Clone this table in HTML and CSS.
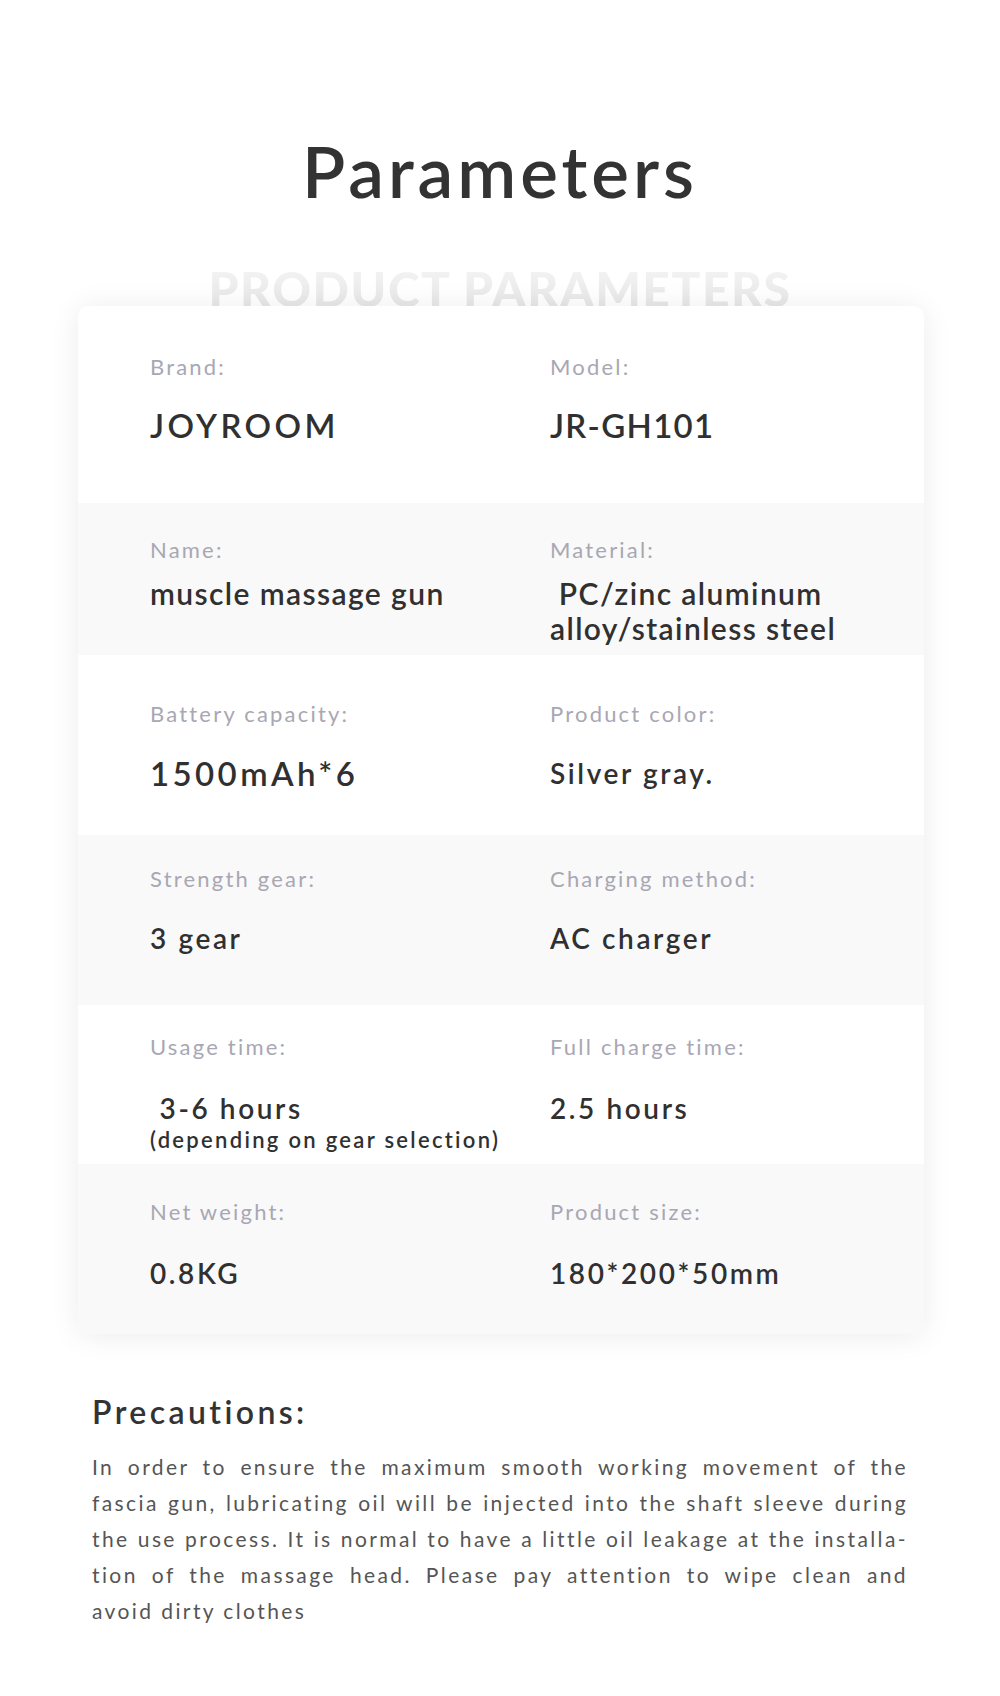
FILE: index.html
```html
<!DOCTYPE html>
<html>
<head>
  <title>Parameters</title>
  <link rel="stylesheet" href="styles.css">
</head>
<body>
  <h1 class="title">Parameters</h1>
  <div class="ghost">PRODUCT PARAMETERS</div>

  <div class="card">
    <div class="row r1">
      <div class="cell">
        <div class="label">Brand:</div>
        <div class="value big">JOYROOM</div>
      </div>
      <div class="cell">
        <div class="label">Model:</div>
        <div class="value big tight">JR-GH101</div>
      </div>
    </div>
    <div class="row r2 grey">
      <div class="cell">
        <div class="label">Name:</div>
        <div class="value mid">muscle massage gun</div>
      </div>
      <div class="cell">
        <div class="label">Material:</div>
        <div class="value mid">&nbsp;PC/zinc aluminum<br>alloy/stainless steel</div>
      </div>
    </div>
    <div class="row r3">
      <div class="cell">
        <div class="label">Battery capacity:</div>
        <div class="value big">1500mAh*6</div>
      </div>
      <div class="cell">
        <div class="label">Product color:</div>
        <div class="value">Silver gray.</div>
      </div>
    </div>
    <div class="row r4 grey">
      <div class="cell">
        <div class="label">Strength gear:</div>
        <div class="value">3 gear</div>
      </div>
      <div class="cell">
        <div class="label">Charging method:</div>
        <div class="value">AC charger</div>
      </div>
    </div>
    <div class="row r5">
      <div class="cell">
        <div class="label">Usage time:</div>
        <div class="value">&nbsp;3-6 hours</div>
        <div class="note">(depending on gear selection)</div>
      </div>
      <div class="cell">
        <div class="label">Full charge time:</div>
        <div class="value">2.5 hours</div>
      </div>
    </div>
    <div class="row r6 grey">
      <div class="cell">
        <div class="label">Net weight:</div>
        <div class="value">0.8KG</div>
      </div>
      <div class="cell">
        <div class="label">Product size:</div>
        <div class="value">180*200*50mm</div>
      </div>
    </div>
  </div>

  <div class="notes">
    <h2 class="notes-title">Precautions:</h2>
    <p class="notes-text">
      <span class="line">In order to ensure the maximum smooth working movement of the</span>
      <span class="line">fascia gun, lubricating oil will be injected into the shaft sleeve during</span>
      <span class="line">the use process. It is normal to have a little oil leakage at the installa-</span>
      <span class="line">tion of the massage head. Please pay attention to wipe clean and</span>
      <span class="line last">avoid dirty clothes</span>
    </p>
  </div>
</body>
</html>
```

FILE: styles.css
```css
* {
  box-sizing: border-box;
}
body {
  margin: 0;
  background: #fff;
  font-family: Lato, "Noto Sans", sans-serif;
  color: #333;
}
.title {
  margin: 135px 0 0;
  font-size: 71px;
  line-height: 1;
  font-weight: 600;
  letter-spacing: 4px;
  text-align: center;
  color: #333;
}
.ghost {
  margin-top: 59px;
  font-size: 48px;
  line-height: 1;
  font-weight: 900;
  letter-spacing: 1.5px;
  text-align: center;
  color: transparent;
  background: linear-gradient(#f4f4f4, #e5e5e5);
  -webkit-background-clip: text;
  background-clip: text;
}
.card {
  position: relative;
  z-index: 1;
  width: 846px;
  margin: -7px 0 0 78px;
  background: #fff;
  border-radius: 10px;
  box-shadow: 0 2px 30px rgba(0, 0, 0, 0.08);
  overflow: hidden;
}
.row {
  display: grid;
  grid-template-columns: 400px 1fr;
  padding-left: 72px;
}
.grey {
  background: #f9f9f9;
}
.label {
  font-size: 22px;
  line-height: 22px;
  letter-spacing: 2.2px;
  color: #a8a7b3;
}
.value {
  font-size: 28px;
  line-height: 33px;
  font-weight: 600;
  letter-spacing: 2.6px;
  color: #303030;
}
.value.big {
  font-size: 33px;
  letter-spacing: 3.4px;
}
.value.tight {
  letter-spacing: 1.3px;
}
.value.mid {
  font-size: 30px;
  line-height: 35px;
  letter-spacing: 1.4px;
}
.note {
  font-size: 22px;
  line-height: 29px;
  font-weight: 600;
  letter-spacing: 2.3px;
  color: #303030;
}
.r1 { height: 197px; padding-top: 50px; }
.r1 .value { margin-top: 31px; }
.r2 { height: 152px; padding-top: 36px; }
.r2 .value { margin-top: 15px; }
.r3 { height: 180px; padding-top: 48px; }
.r3 .value { margin-top: 32px; }
.r4 { height: 170px; padding-top: 33px; }
.r4 .value { margin-top: 32px; }
.r5 { height: 159px; padding-top: 31px; }
.r5 .value { margin-top: 34px; }
.r6 { height: 170px; padding-top: 37px; }
.r6 .value { margin-top: 34px; }

.notes {
  margin: 0 92px;
}
.notes-title {
  margin: 62px 0 0;
  font-size: 32px;
  line-height: 1;
  font-weight: 600;
  letter-spacing: 3.4px;
  color: #333;
}
.notes-text {
  margin: 21px 0 0;
  font-size: 21px;
  line-height: 36px;
  letter-spacing: 2.4px;
  color: #555;
}
.line {
  display: block;
  white-space: nowrap;
  text-align: justify;
  text-align-last: justify;
}
.line.last {
  text-align-last: left;
}
```
